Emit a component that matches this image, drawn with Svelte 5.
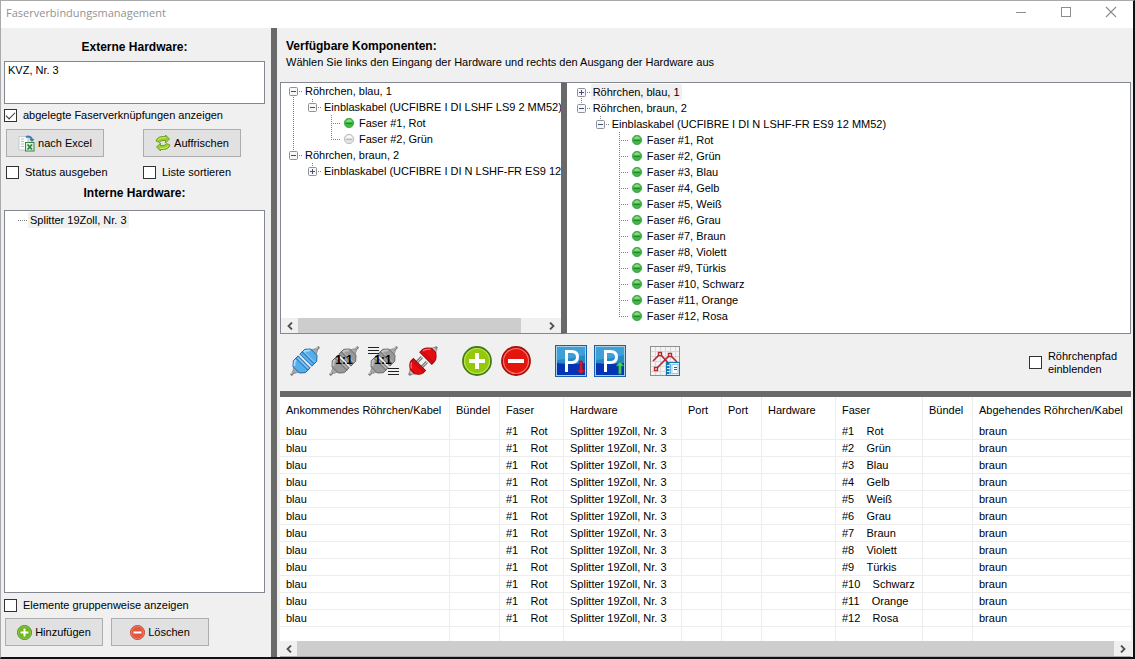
<script lang="ts">
  type TreeRow = { cells: string[]; text: string; dot?: 'on' | 'off'; selected?: boolean };

  const colors = ['Rot', 'Grün', 'Blau', 'Gelb', 'Weiß', 'Grau', 'Braun', 'Violett', 'Türkis', 'Schwarz', 'Orange', 'Rosa'];

  // cell flags: u/d/r = dotted line up, down, right; + or - = expander box
  const inputTree: TreeRow[] = [
    { cells: ['dr-'], text: 'Röhrchen, blau, 1' },
    { cells: ['ud', 'ur-'], text: 'Einblaskabel (UCFIBRE I DI LSHF LS9 2 MM52)' },
    { cells: ['ud', '', 'udr'], text: 'Faser #1, Rot', dot: 'on' },
    { cells: ['ud', '', 'ur'], text: 'Faser #2, Grün', dot: 'off' },
    { cells: ['ur-'], text: 'Röhrchen, braun, 2' },
    { cells: ['', 'ur+'], text: 'Einblaskabel (UCFIBRE I DI N LSHF-FR ES9 12 MM52)' }
  ];

  const outputTree: TreeRow[] = [
    { cells: ['dr+'], text: 'Röhrchen, blau, 1', selected: true },
    { cells: ['ur-'], text: 'Röhrchen, braun, 2' },
    { cells: ['', 'ur-'], text: 'Einblaskabel (UCFIBRE I DI N LSHF-FR ES9 12 MM52)' },
    ...colors.map((color, i): TreeRow => ({
      cells: ['', '', i === colors.length - 1 ? 'ur' : 'udr'],
      text: `Faser #${i + 1}, ${color}`,
      dot: 'on'
    }))
  ];

  const internalTree: TreeRow[] = [{ cells: ['r'], text: 'Splitter 19Zoll, Nr. 3', selected: true }];

  const columns = [
    { label: 'Ankommendes Röhrchen/Kabel', width: 170 },
    { label: 'Bündel', width: 50 },
    { label: 'Faser', width: 64 },
    { label: 'Hardware', width: 118 },
    { label: 'Port', width: 40 },
    { label: 'Port', width: 40 },
    { label: 'Hardware', width: 74 },
    { label: 'Faser', width: 87 },
    { label: 'Bündel', width: 50 },
    { label: 'Abgehendes Röhrchen/Kabel', width: 0 }
  ];

  const gap = '\u00a0\u00a0\u00a0\u00a0';
  const rows = colors.map((color, i) => [
    'blau', '', `#1${gap}Rot`, 'Splitter 19Zoll, Nr. 3', '', '', '', `#${i + 1}${gap}${color}`, '', 'braun'
  ]);

  let showStored = $state(true);
  let writeStatus = $state(false);
  let sortList = $state(false);
  let grouped = $state(false);
  let showPath = $state(false);
</script>

{#snippet tree(items: TreeRow[], label: string)}
  <ul class="tree" aria-label={label}>
    {#each items as item}
      <li>
        {#each item.cells as cell}
          <svg class="cell" width="19" height="16" viewBox="0 0 19 16" aria-hidden="true">
            <g stroke="#808080" stroke-dasharray="1 1">
              {#if cell.includes('u')}<path d="M9.5 0V8" />{/if}
              {#if cell.includes('d')}<path d="M9.5 8V16" />{/if}
              {#if cell.includes('r')}<path d="M9 8.5H19" />{/if}
            </g>
            {#if /[+-]/.test(cell)}
              <rect x="5.5" y="4.5" width="8" height="8" rx="1" fill="#f6f6f6" stroke="#919191" />
              <path d="M7 8.5H12" stroke="#3c4f8c" />
              {#if cell.includes('+')}<path d="M9.5 6V11" stroke="#3c4f8c" />{/if}
            {/if}
          </svg>
        {/each}
        {#if item.dot}
          <svg class="dot" width="16" height="16" viewBox="0 0 16 16" aria-hidden="true">
            {#if item.dot === 'on'}
              <circle cx="8" cy="8" r="4.7" fill="#3db73f" stroke="#3f9a46" stroke-width="0.8" />
              <path d="M4.5 6.8Q8 1.8 11.5 6.8Z" fill="#8fdc8c" />
              <path d="M4.5 8.5H11.5" stroke="#1f8a2a" />
            {:else}
              <circle cx="8" cy="8" r="4.7" fill="#e2e2e2" stroke="#b0b0b0" stroke-width="0.8" />
              <path d="M4.5 6.8Q8 1.8 11.5 6.8Z" fill="#fafafa" />
              <path d="M5 8.5H11" stroke="#b4b4b4" />
            {/if}
          </svg>
        {/if}
        <span class="node" class:selected={item.selected}>{item.text}</span>
      </li>
    {/each}
  </ul>
{/snippet}

{#snippet scrollbar(grow: number, rest: number)}
  <div class="scrollbar">
    <button type="button" aria-label="Nach links">
      <svg width="8" height="8" viewBox="0 0 8 8"><path d="M6 0.5L2.5 4L6 7.5" fill="none" stroke="#505050" stroke-width="1.8" /></svg>
    </button>
    <div class="track">
      <div class="thumb" style="flex-grow: {grow}"></div>
      <div style="flex-grow: {rest}"></div>
    </div>
    <button type="button" aria-label="Nach rechts">
      <svg width="8" height="8" viewBox="0 0 8 8"><path d="M2 0.5L5.5 4L2 7.5" fill="none" stroke="#505050" stroke-width="1.8" /></svg>
    </button>
  </div>
{/snippet}

{#snippet plug(fill: string, light: string, dark: string)}
  <g transform="translate(15 15) rotate(-45)">
    <path d="M-20 0H-14M14 0H20" stroke="#777" stroke-width="2.6" />
    <path d="M-19 -0.4H-14M14 -0.4H19" stroke="#c8c8c8" />
    <path d="M-16 -1.5L-12 -3.5V3.5L-16 1.5ZM16 -1.5L12 -3.5V3.5L16 1.5Z" fill="#aaa" stroke="#777" stroke-width="0.6" />
    <path d="M-2 -4H2M-2 4H2" stroke="#fff" stroke-width="4" />
    <path d="M-12.5 -4.5L-8 -8.5H-1.2V8.5H-8L-12.5 4.5ZM12.5 -4.5L8 -8.5H1.2V8.5H8L12.5 4.5Z" {fill} stroke={dark} stroke-width="0.9" />
    <path d="M-11 -4L-7.5 -7H-5.5M5.5 -7H7.5L11 -4" fill="none" stroke={light} stroke-width="1.8" />
    <path d="M-4.5 -8.5V8.5M4.5 -8.5V8.5" stroke={dark} stroke-width="0.9" />
    <path d="M-3 -7.5V7.5M6 -7.5V7.5" stroke={light} stroke-width="0.8" />
  </g>
{/snippet}

{#snippet parking(down: boolean)}
  <svg width="32" height="32" viewBox="0 0 32 32">
    <rect width="32" height="32" fill="#1761ac" />
    <rect x="1.5" y="1.5" width="29" height="29" fill="#2589c9" stroke="#a8cfea" />
    <path d="M2 18Q16 20 30 18V30H2Z" fill="#0534b4" />
    <path d="M2 2H30V10Q16 14 2 15Z" fill="#3da0d6" />
    <path d="M11.5 27V6.5H16.5Q22.5 6.500 22.5 12Q22.5 17.5 16.5 17.5H12" fill="none" stroke="#fff" stroke-width="3" />
    {#if down}
      <path d="M24.7 16H27.3V25H30L26 29L22 25H24.7Z" fill="#d61a35" stroke="#a00f2a" stroke-width="0.8" />
    {:else}
      <path d="M24.7 29H27.3V21H30L26 16.5L22 21H24.7Z" fill="#43d85b" stroke="#168a48" stroke-width="0.8" />
    {/if}
  </svg>
{/snippet}

{#snippet roundSign(size: number, plus: boolean, fill: string, dark: string, light: string)}
  <svg width={size} height={size} viewBox="0 0 30 30">
    <circle cx="15" cy="15" r="14" {fill} stroke={dark} stroke-width="1.8" />
    <circle cx="15" cy="15" r="12.5" fill="none" stroke={light} stroke-width="1.2" />
    <path d="M7 15H23" stroke="#fff" stroke-width="4" />
    {#if plus}<path d="M15 7V23" stroke="#fff" stroke-width="4" />{/if}
  </svg>
{/snippet}

<div class="window">
  <header class="titlebar">
    <span class="title">Faserverbindungsmanagement</span>
    <button type="button" aria-label="Minimieren">
      <svg width="12" height="12" viewBox="0 0 12 12"><path d="M1 6.5H11" stroke="#8c8c8c" /></svg>
    </button>
    <button type="button" aria-label="Maximieren">
      <svg width="12" height="12" viewBox="0 0 12 12"><rect x="1.5" y="1.5" width="9" height="9" fill="none" stroke="#8c8c8c" /></svg>
    </button>
    <button type="button" aria-label="Schließen">
      <svg width="12" height="12" viewBox="0 0 12 12"><path d="M1 1L11 11M11 1L1 11" stroke="#8c8c8c" stroke-width="1.1" /></svg>
    </button>
  </header>

  <div class="content">
    <aside class="sidebar">
      <h2>Externe Hardware:</h2>
      <textarea class="external" aria-label="Externe Hardware" readonly value="KVZ, Nr. 3"></textarea>
      <label class="check"><input type="checkbox" bind:checked={showStored} />abgelegte Faserverknüpfungen anzeigen</label>
      <div class="pair">
        <button type="button" class="push">
          <svg width="17" height="17" viewBox="0 0 17 17">
            <path d="M1 1.5H10V15H1Z" fill="#f8fafc" stroke="#c3cbd3" />
            <path d="M3 4H6M3 6.5H6M3 9H6M3 11.5H6" stroke="#a8ccb0" />
            <path d="M8 2Q12 0.5 14 4" fill="none" stroke="#3f76b5" stroke-width="2" />
            <path d="M11.5 4H16.5L14 7Z" fill="#3f76b5" />
            <rect x="7.5" y="7.5" width="8.5" height="8.5" fill="#dff0dc" stroke="#388544" />
            <path d="M9.5 9.5L14 14.5M14 9.5L9.5 14.5" stroke="#2b8740" stroke-width="1.8" />
          </svg>
          nach Excel
        </button>
        <button type="button" class="push">
          <svg width="16" height="16" viewBox="0 0 16 16">
            <g fill="#9bcf25" stroke="#568716" stroke-width="0.7" stroke-linejoin="round">
              <path d="M1 6Q2.5 1.5 7.5 1.5H10.5V0L14.5 4L10.5 8V5.500H8Q5.500 5.5 4.500 7.500Z" />
              <path d="M15 10Q13.5 14.5 8.5 14.5H5.5V16L1.5 12L5.5 8V10.5H8Q10.5 10.5 11.5 8.5Z" />
            </g>
            <path d="M2.5 5.5Q4 2.7 8 2.6H11M13.5 10.5Q12 13.3 8 13.4H5" fill="none" stroke="#d3ee7c" stroke-width="0.9" />
          </svg>
          Auffrischen
        </button>
        <label class="check"><input type="checkbox" bind:checked={writeStatus} />Status ausgeben</label>
        <label class="check"><input type="checkbox" bind:checked={sortList} />Liste sortieren</label>
      </div>
      <h2>Interne Hardware:</h2>
      <div class="internal">{@render tree(internalTree, 'Interne Hardware')}</div>
      <label class="check"><input type="checkbox" bind:checked={grouped} />Elemente gruppenweise anzeigen</label>
      <div class="actions">
        <button type="button" class="push">{@render roundSign(15, true, '#6cb71d', '#3f8110', '#a4d95e')} Hinzufügen</button>
        <button type="button" class="push">{@render roundSign(15, false, '#e4573f', '#b53c2b', '#f49c88')} Löschen</button>
      </div>
    </aside>

    <main class="main">
      <div class="intro">
        <h2>Verfügbare Komponenten:</h2>
        <p>Wählen Sie links den Eingang der Hardware und rechts den Ausgang der Hardware aus</p>
      </div>

      <div class="trees">
        <div class="pane pane-in">
          {@render tree(inputTree, 'Eingang')}
          {@render scrollbar(223, 23)}
        </div>
        <div class="pane pane-out">{@render tree(outputTree, 'Ausgang')}</div>
      </div>

      <div class="toolbar">
        <button type="button" aria-label="Verbinden">
          <svg width="30" height="30" viewBox="0 0 30 30">{@render plug('#55aeea', '#a9dcfb', '#1c64a8')}</svg>
        </button>
        <button type="button" aria-label="1:1 verbinden">
          <svg width="30" height="30" viewBox="0 0 30 30">
            {@render plug('#999', '#c4c4c4', '#666')}
            <text x="15" y="18" text-anchor="middle" class="ratio">1:1</text>
          </svg>
        </button>
        <button type="button" aria-label="Liste 1:1 verbinden">
          <svg width="31" height="30" viewBox="0 0 31 30">
            {@render plug('#999', '#c4c4c4', '#666')}
            <path d="M0 1.5H11M0 4.5H11M0 7.5H11M20 22.5H31M20 25.5H31M20 28.5H31" stroke="#222" />
            <text x="15" y="18" text-anchor="middle" class="ratio">1:1</text>
          </svg>
        </button>
        <button type="button" aria-label="Trennen">
          <svg width="30" height="30" viewBox="0 0 30 30">
            <g transform="translate(15 15) rotate(-45)">
              <path d="M-20 0H-15M15 0H20" stroke="#888" stroke-width="3" />
              <path d="M-18 -1.5L-14 -3.5V3.5L-18 1.5ZM18 -1.5L14 -3.5V3.5L18 1.5Z" fill="#bbb" stroke="#777" stroke-width="0.6" />
              <path d="M-5 -3.5H2M-5 3.5H2" stroke="#666" stroke-width="3" />
              <path d="M-5 -3.5H2M-5 3.5H2" stroke="#ddd" />
              <path d="M-5 -8.5V8.5H-9Q-12 7.500 -15 3V-3Q-12 -7.5 -9 -8.5ZM4 -8.5V8.5H8Q12 7.5 15 3V-3Q12 -7.5 8 -8.5Z" fill="#e60d12" stroke="#9c080b" />
              <path d="M-13.500 -3Q-12 -6 -9 -7M6 -7H8Q11 -6 13.500 -3" fill="none" stroke="#ff7676" stroke-width="1.2" />
              <path d="M-7.5 -8V8M6.5 -8V8" stroke="#b50b0e" />
            </g>
          </svg>
        </button>
        <button type="button" class="gap-wide" aria-label="Hinzufügen">{@render roundSign(30, true, '#94c90a', '#417d12', '#bde05c')}</button>
        <button type="button" aria-label="Entfernen">{@render roundSign(30, false, '#e3150d', '#a90f09', '#f47870')}</button>
        <button type="button" class="gap-wide" aria-label="Parken">{@render parking(true)}</button>
        <button type="button" class="gap-small" aria-label="Ausparken">{@render parking(false)}</button>
        <button type="button" class="gap-wide" aria-label="Auswertung">
          <svg width="30" height="30" viewBox="0 0 30 30">
            <rect x="0.5" y="0.5" width="29" height="29" fill="#f3f3f3" stroke="#8e8e8e" />
            <path d="M5.5 1V29M10.5 1V29M15.5 1V29M20.5 1V29M25.5 1V29M1 5.5H29M1 10.5H29M1 15.5H29M1 20.5H29M1 25.5H29" stroke="#d8d8d8" />
            <path d="M3 15L10 8L20 19M6 23L20 9L27 16" fill="none" stroke="#b92732" stroke-width="1.6" />
            <path d="M8.5 6.5H11.5V9.5H8.5ZM18.5 7.5H21.5V10.5H18.5ZM4.5 21.5H7.5V24.5H4.5Z" fill="#fff" stroke="#b92732" stroke-width="1.4" />
            <rect x="16.5" y="16.5" width="13" height="13" fill="#d9eef9" stroke="#1776b2" />
            <path d="M18 17V29" stroke="#1776b2" stroke-width="3" stroke-dasharray="2 1" />
            <path d="M20.5 18V28" stroke="#5fb5df" />
            <rect x="22" y="18.5" width="6" height="9" fill="#fff" stroke="#8fc9e6" />
            <path d="M24 21.5H27M24 23.5H27" stroke="#345d91" />
          </svg>
        </button>
        <label class="check path-check"><input type="checkbox" bind:checked={showPath} /><span>Röhrchenpfad<br />einblenden</span></label>
      </div>

      <div class="connections">
        <table>
          <colgroup>
            {#each columns as column}
              <col style={column.width ? `width: ${column.width}px` : ''} />
            {/each}
          </colgroup>
          <thead>
            <tr>
              {#each columns as column}<th scope="col">{column.label}</th>{/each}
            </tr>
          </thead>
          <tbody>
            {#each rows as row}
              <tr>
                {#each row as value}<td>{value}</td>{/each}
              </tr>
            {/each}
            <tr class="filler" aria-hidden="true">
              {#each columns as _}<td></td>{/each}
            </tr>
          </tbody>
        </table>
        {@render scrollbar(806, 0)}
      </div>
    </main>
  </div>
</div>

<style>
  :global(body) {
    background: #fff;
  }

  .window {
    box-sizing: border-box;
    display: flex;
    flex-direction: column;
    min-height: 100vh;
    border: 1px solid #aaa;
    border-right: 2px solid #111;
    border-bottom: 2px solid #111;
    background: #f0f0f0;
    color: #000;
    font: 11px/16px 'Liberation Sans', Arial, sans-serif;
  }

  button,
  textarea {
    font: inherit;
    color: inherit;
  }

  h2,
  p {
    margin: 0;
  }

  h2 {
    font-size: 12px;
    line-height: 16px;
  }

  .titlebar {
    display: flex;
    height: 27px;
    background: #fff;
  }

  .title {
    flex: 1;
    padding-left: 5px;
    color: #929292;
    font: 11px/24px 'Open Sans', sans-serif;
  }

  .titlebar button {
    display: flex;
    align-items: center;
    justify-content: center;
    width: 45px;
    height: 22px;
    padding: 0;
    border: 0;
    background: none;
  }

  .content {
    display: flex;
    flex: 1;
  }

  .sidebar {
    box-sizing: border-box;
    display: flex;
    flex-direction: column;
    flex: none;
    width: 270px;
    padding: 11px 6px 11px 3px;
  }

  .sidebar h2 {
    text-align: center;
  }

  .external {
    box-sizing: border-box;
    height: 43px;
    margin: 6px 0 3px;
    padding: 0 3px;
    border: 1px solid #828790;
    background: #fff;
    resize: none;
    outline: 0;
  }

  .check {
    display: flex;
    align-items: center;
    gap: 6px;
  }

  .check input {
    appearance: none;
    box-sizing: border-box;
    flex: none;
    width: 13px;
    height: 13px;
    margin: 0;
    border: 1px solid #333;
    background: #fff;
  }

  .check input:checked::after {
    content: '';
    display: block;
    box-sizing: border-box;
    width: 9px;
    height: 5px;
    margin: 2px 1px;
    border: solid #333;
    border-width: 0 0 1px 1px;
    transform: rotate(-45deg);
  }

  .push {
    box-sizing: border-box;
    display: flex;
    align-items: center;
    justify-content: center;
    gap: 3px;
    width: 98px;
    height: 28px;
    padding: 0;
    border: 1px solid #adadad;
    background: #e1e1e1;
  }

  .pair {
    display: grid;
    grid-template-columns: 137px 1fr;
    row-gap: 7px;
    padding: 6px 2px 5px;
  }

  .internal {
    flex: 1;
    margin: 9px 0 4px;
    padding: 1px;
    border: 1px solid #828790;
    background: #fff;
  }

  .actions {
    display: flex;
    gap: 8px;
    padding: 5px 1px 0;
  }

  .main {
    display: flex;
    flex-direction: column;
    flex: 1;
    min-width: 0;
    padding-left: 3px;
    border-left: 6px solid #696969;
  }

  .intro {
    padding: 10px 6px 12px;
  }

  .trees {
    display: flex;
    margin-right: 2px;
  }

  .pane {
    box-sizing: border-box;
    border: 1px solid #828790;
    background: #fff;
    overflow: hidden;
  }

  .pane-in {
    display: flex;
    flex-direction: column;
    justify-content: space-between;
    flex: 1;
    border-right: 0;
  }

  .pane-out {
    flex: 2;
    padding: 1px 2px 9px;
    border-left: 6px solid #696969;
  }

  .tree {
    margin: 0;
    padding: 0 0 0 3px;
    list-style: none;
  }

  .tree li {
    display: flex;
    height: 16px;
    white-space: nowrap;
  }

  .cell,
  .dot {
    flex: none;
  }

  .node {
    padding: 0 2px;
  }

  .selected {
    background: #f0f0f0;
  }

  .scrollbar {
    display: flex;
    height: 15px;
    background: #f0f0f0;
  }

  .scrollbar button {
    display: flex;
    align-items: center;
    justify-content: center;
    width: 17px;
    padding: 0;
    border: 0;
    background: none;
  }

  .track {
    display: flex;
    flex: 1;
  }

  .thumb {
    background: #cdcdcd;
  }

  .toolbar {
    display: flex;
    align-items: center;
    gap: 9px;
    height: 57px;
    padding: 0 16px 0 10px;
  }

  .toolbar button {
    display: flex;
    height: 32px;
    align-items: center;
    margin-bottom: 4px;
    padding: 0;
    border: 0;
    background: none;
  }

  .toolbar .gap-wide {
    margin-left: 15px;
  }

  .toolbar .gap-small {
    margin-left: -2px;
  }

  .ratio {
    font: bold 12px 'Liberation Sans', sans-serif;
  }

  .path-check {
    margin-left: auto;
    line-height: 13px;
  }

  .connections {
    display: grid;
    grid-template-rows: 1fr auto;
    flex: 1;
    margin-right: 2px;
    border-top: 6px solid #696969;
    border-bottom: 1px solid #aaa;
    background: #fff;
  }

  table {
    width: 100%;
    height: 100%;
    border-collapse: separate;
    border-spacing: 0;
    table-layout: fixed;
  }

  th,
  td {
    box-sizing: border-box;
    padding: 0 0 0 6px;
    border-right: 1px solid #ededed;
    text-align: left;
    white-space: nowrap;
  }

  th {
    height: 26px;
    font-weight: normal;
  }

  td {
    height: 17px;
    border-bottom: 1px solid #ededed;
  }

  th:last-child,
  td:last-child {
    border-right: 0;
  }

  .filler td {
    height: auto;
    border-bottom: 0;
  }
</style>
